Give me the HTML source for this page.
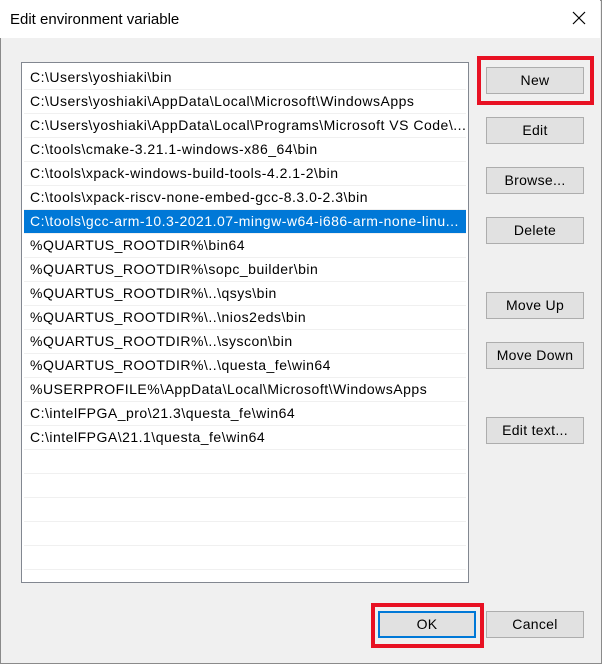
<!DOCTYPE html>
<html><head><style>
*{margin:0;padding:0;box-sizing:border-box}
body{width:602px;height:664px;overflow:hidden;background:#f0f0f0;font-family:"Liberation Sans",sans-serif;position:relative}
.win{position:absolute;left:0;top:0;width:602px;height:664px;border:1px solid #8a8a8a}
.title{position:absolute;left:0;top:0;width:600px;height:38px;background:#fff}
.title span{position:absolute;left:10px;top:11px;font-size:15px;color:#000}
.x{position:absolute;left:572px;top:11px}
.list{position:absolute;left:21px;top:62px;width:448px;height:521px;background:#fff;border:1px solid #828790;overflow:hidden}
.row{position:absolute;left:2px;width:442px;height:24px;border-bottom:1px solid #f0f0f0;font-size:14px;letter-spacing:0.5px;line-height:23px;padding-left:6px;white-space:nowrap;color:#000;overflow:hidden}
.row.sel{background:#0078d7;color:#fff}
.btn{position:absolute;width:98px;height:27px;background:#e1e1e1;border:1px solid #adadad;font-size:14px;letter-spacing:0.3px;text-align:center;line-height:25px;color:#000}
.red{position:absolute;border:4px solid #e81123}
</style></head><body>
<div class="win"></div>
<div class="title"><span>Edit environment variable</span>
<svg class="x" width="14" height="14" viewBox="0 0 14 14"><path d="M1 1L13 13M13 1L1 13" stroke="#000" stroke-width="1.2"/></svg></div>
<div class="list">
<div class="row" style="top:3px">C:\Users\yoshiaki\bin</div>
<div class="row" style="top:27px">C:\Users\yoshiaki\AppData\Local\Microsoft\WindowsApps</div>
<div class="row" style="top:51px">C:\Users\yoshiaki\AppData\Local\Programs\Microsoft VS Code\...</div>
<div class="row" style="top:75px">C:\tools\cmake-3.21.1-windows-x86_64\bin</div>
<div class="row" style="top:99px">C:\tools\xpack-windows-build-tools-4.2.1-2\bin</div>
<div class="row" style="top:123px">C:\tools\xpack-riscv-none-embed-gcc-8.3.0-2.3\bin</div>
<div class="row sel" style="top:147px">C:\tools\gcc-arm-10.3-2021.07-mingw-w64-i686-arm-none-linu...</div>
<div class="row" style="top:171px">%QUARTUS_ROOTDIR%\bin64</div>
<div class="row" style="top:195px">%QUARTUS_ROOTDIR%\sopc_builder\bin</div>
<div class="row" style="top:219px">%QUARTUS_ROOTDIR%\..\qsys\bin</div>
<div class="row" style="top:243px">%QUARTUS_ROOTDIR%\..\nios2eds\bin</div>
<div class="row" style="top:267px">%QUARTUS_ROOTDIR%\..\syscon\bin</div>
<div class="row" style="top:291px">%QUARTUS_ROOTDIR%\..\questa_fe\win64</div>
<div class="row" style="top:315px">%USERPROFILE%\AppData\Local\Microsoft\WindowsApps</div>
<div class="row" style="top:339px">C:\intelFPGA_pro\21.3\questa_fe\win64</div>
<div class="row" style="top:363px">C:\intelFPGA\21.1\questa_fe\win64</div>
<div class="row" style="top:387px"></div>
<div class="row" style="top:411px"></div>
<div class="row" style="top:435px"></div>
<div class="row" style="top:459px"></div>
<div class="row" style="top:483px"></div>
</div>
<div class="red" style="left:477px;top:56px;width:117px;height:49px"></div>
<div class="btn" style="left:486px;top:67px">New</div>
<div class="btn" style="left:486px;top:117px">Edit</div>
<div class="btn" style="left:486px;top:167px">Browse...</div>
<div class="btn" style="left:486px;top:217px">Delete</div>
<div class="btn" style="left:486px;top:292px">Move Up</div>
<div class="btn" style="left:486px;top:342px">Move Down</div>
<div class="btn" style="left:486px;top:417px">Edit text...</div>
<div class="red" style="left:371px;top:603px;width:113px;height:45px"></div>
<div class="btn" style="left:378px;top:611px;border:2px solid #0078d7;line-height:23px">OK</div>
<div class="btn" style="left:486px;top:611px">Cancel</div>
</body></html>
